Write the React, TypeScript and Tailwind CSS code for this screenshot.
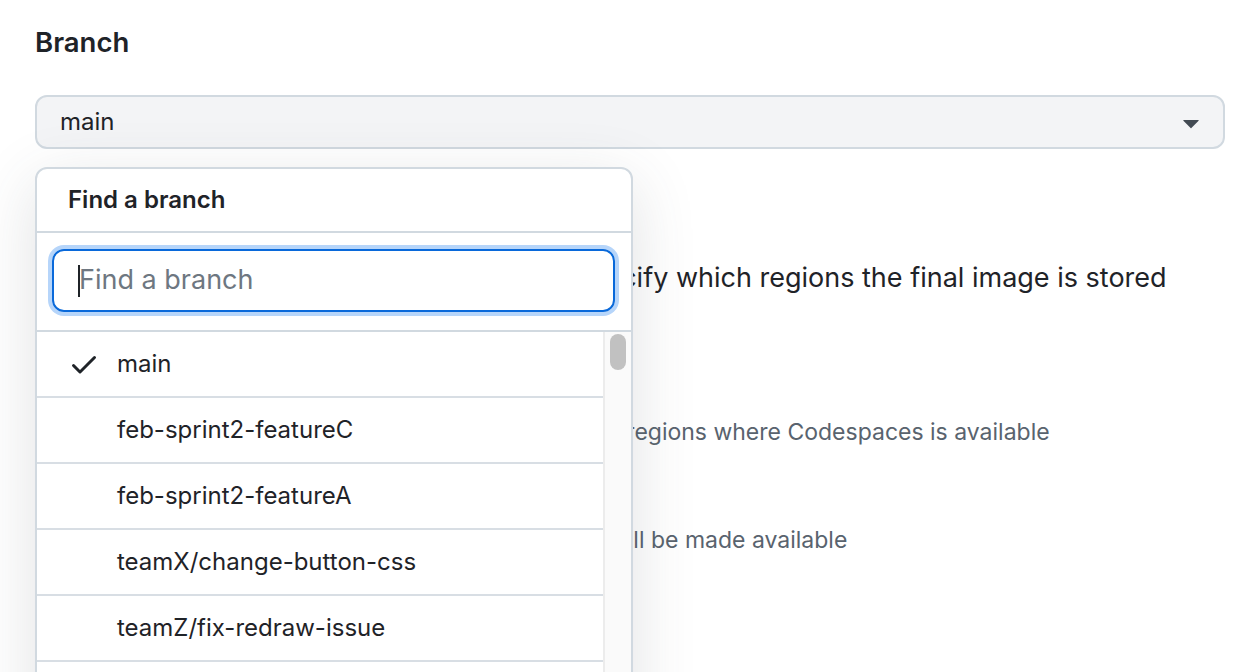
const BRANCHES = [
  "main",
  "feb-sprint2-featureC",
  "feb-sprint2-featureA",
  "teamX/change-button-css",
  "teamZ/fix-redraw-issue",
  "teamY/update-docs",
];

function CheckIcon() {
  return (
    <svg width="32" height="32" viewBox="0 0 16 16" fill="#1f2328" aria-hidden="true">
      <path d="M13.78 4.22a.75.75 0 0 1 0 1.06l-7.25 7.25a.75.75 0 0 1-1.06 0L2.22 9.28a.751.751 0 0 1 .018-1.042.751.751 0 0 1 1.042-.018L6 10.94l6.72-6.72a.75.75 0 0 1 1.06 0Z" />
    </svg>
  );
}

function TriangleDown() {
  return (
    <svg width="34" height="34" viewBox="0 0 16 16" fill="#424a53" aria-hidden="true">
      <path d="m4.427 7.427 3.396 3.396a.25.25 0 0 0 .354 0l3.396-3.396A.25.25 0 0 0 11.396 7H4.604a.25.25 0 0 0-.177.427Z" />
    </svg>
  );
}

function BranchMenu() {
  return (
    <div className="absolute left-[35px] top-[167px] flex h-[560px] w-[598px] flex-col overflow-hidden rounded-xl border-2 border-[#d1d9e0] bg-white shadow-[0_16px_64px_rgba(66,74,83,0.16)]">
      <div className="flex h-[64px] shrink-0 items-center border-b-2 border-[#d1d9e0] pl-[31px] text-[24px] font-semibold">
        Find a branch
      </div>
      <div className="shrink-0 border-b-2 border-[#d1d9e0] pb-[18px] pl-[15px] pr-[16px] pt-[16px]">
        <div className="flex h-[63px] items-center rounded-xl border-2 border-[#0969da] pl-[24px] ring-4 ring-[#b6d5fa]">
          <span className="mr-[-1px] h-[32px] w-[2px] bg-[#1f2328]" />
          <span className="text-[27px] text-[#6e7781]">Find a branch</span>
        </div>
      </div>
      <div className="flex flex-1">
        <div className="flex-1">
          {BRANCHES.map((b, i) => (
            <div
              key={b}
              className="flex h-[66px] items-center gap-[17px] border-b-2 border-[#d8dee4] pl-[31px] text-[24px]"
            >
              <span className="flex w-[32px] justify-center">{i === 0 ? <CheckIcon /> : null}</span>
              <span>{b}</span>
            </div>
          ))}
        </div>
        <div className="w-[28px] border-l-2 border-[#ececec] bg-[#fafafa] pl-[5px] pt-[2px]">
          <div className="h-[36px] w-[16px] rounded-full bg-[#c1c1c1]" />
        </div>
      </div>
    </div>
  );
}

export default function App() {
  return (
    <div className="relative h-[672px] w-[1248px] overflow-hidden bg-white font-['Inter','Noto_Sans',sans-serif] text-[#1f2328]">
      <div className="pl-[35px] pr-[23px] pt-[24px]">
        <h2 className="text-[27.5px] font-semibold leading-[36px]">Branch</h2>
        <div className="mt-[35px] flex h-[54px] items-center justify-between rounded-xl border-2 border-[#d1d9e0] bg-[#f3f4f6] pl-[23px] pr-[15px] text-[24px]">
          <span>main</span>
          <TriangleDown />
        </div>

        <p className="mt-[111px] pl-[16px] text-[27px] leading-[36px]">
          Images are stored in all regions. You can specify which regions the final image is stored
          <br />
          in.
        </p>
        <p className="mt-[84px] pl-[104px] text-[23px] leading-[32px] text-[#59636e]">
          Reduce storage costs by building in only the regions where Codespaces is available
        </p>
        <p className="mt-[76px] pl-[202px] text-[23px] leading-[32px] text-[#59636e]">
          Prebuilds for the selected regions will be made available
        </p>
      </div>
      <BranchMenu />
    </div>
  );
}
